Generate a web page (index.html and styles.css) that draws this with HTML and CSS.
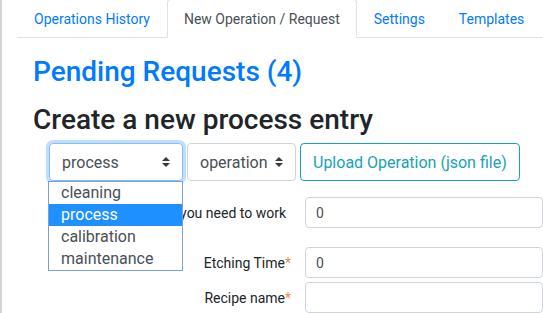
FILE: index.html
```html
<!DOCTYPE html>
<html lang="en">
<head>
    <meta charset="UTF-8">
    <title>New Operation / Request</title>
    <link rel="stylesheet" href="styles.css">
</head>
<body>
    <div class="page">
        <ul class="nav-tabs">
            <li><a class="nav-link" href="#">Operations History</a></li>
            <li><a class="nav-link active" href="#">New Operation / Request</a></li>
            <li><a class="nav-link" href="#">Settings</a></li>
            <li><a class="nav-link" href="#">Templates</a></li>
        </ul>

        <main class="content">
            <h2 class="pending">Pending Requests (4)</h2>
            <h2 class="create">Create a new process entry</h2>

            <div class="toolbar">
                <div class="select-wrap">
                    <div class="fake-select focused">
                        <span>process</span>
                        <svg class="arrows" width="8" height="10" viewBox="0 0 8 10"><path d="M4 0 L8 4 H0 Z M0 6 H8 L4 10 Z" fill="#343a40"/></svg>
                    </div>
                    <ul class="dropdown">
                        <li>cleaning</li>
                        <li class="selected">process</li>
                        <li>calibration</li>
                        <li>maintenance</li>
                    </ul>
                </div>
                <div class="fake-select small">
                    <span>operation</span>
                    <svg class="arrows" width="8" height="10" viewBox="0 0 8 10"><path d="M4 0 L8 4 H0 Z M0 6 H8 L4 10 Z" fill="#343a40"/></svg>
                </div>
                <button class="btn-upload">Upload Operation (json file)</button>
            </div>

            <form class="entry-form">
                <div class="form-row first">
                    <label class="no-req"><span>Time you need to work</span></label>
                    <input type="text" value="0">
                </div>
                <div class="form-row">
                    <label><span>Etching Time<span class="req">*</span></span></label>
                    <input type="text" value="0">
                </div>
                <div class="form-row tight">
                    <label><span>Recipe name<span class="req">*</span></span></label>
                    <input type="text" value="">
                </div>
            </form>
        </main>
    </div>
</body>
</html>
```

FILE: styles.css
```css
body {
    margin: 0;
    font-family: Roboto, "Liberation Sans", sans-serif;
    color: #212529;
    background-color: #fff;
    overflow: hidden;
}
.page {
    border-left: 2px solid #d4d4d4;
    min-height: 313px;
    padding-left: 15px;
}
.nav-tabs {
    display: flex;
    list-style: none;
    margin: -1px 0 0 0;
    padding: 0;
    border-bottom: 1px solid #dee2e6;
}
.nav-link {
    display: block;
    padding: 9px 16px 8px;
    font-size: 14px;
    line-height: 20px;
    color: #007bff;
    text-decoration: none;
    border: 1px solid transparent;
    margin-bottom: -1px;
}
.nav-link.active {
    color: #495057;
    background-color: #fff;
    border-color: #dee2e6 #dee2e6 #fff;
    border-top-left-radius: 4px;
    border-top-right-radius: 4px;
}
.content {
    padding-left: 16px;
}
h2 {
    margin: 0;
    font-weight: 500;
    font-size: 28px;
    line-height: 34px;
}
.pending {
    color: #007bff;
    margin-top: 17px;
}
.create {
    margin-top: 14px;
}
.toolbar {
    display: flex;
    gap: 4px;
    margin-top: 6px;
    margin-left: 16px;
}
.select-wrap {
    position: relative;
}
.fake-select {
    box-sizing: border-box;
    display: flex;
    align-items: center;
    justify-content: space-between;
    height: 38px;
    width: 134px;
    padding: 0 12px;
    border: 1px solid #ced4da;
    border-radius: 4px;
    font-size: 16px;
    color: #495057;
}
.fake-select.small {
    width: 109px;
}
.fake-select.focused {
    border-color: #80bdff;
    box-shadow: 0 0 0 3px rgba(0, 123, 255, 0.25);
}
.arrows {
    display: block;
}
.dropdown {
    position: absolute;
    top: 38px;
    left: -1px;
    z-index: 2;
    box-sizing: border-box;
    width: 135px;
    margin: 0;
    padding: 0;
    list-style: none;
    background-color: #fff;
    border: 1px solid #7a9fd9;
}
.dropdown li {
    height: 22px;
    line-height: 22px;
    padding-left: 12px;
    font-size: 16px;
    color: #495057;
}
.dropdown li.selected {
    background-color: #1e90ff;
    color: #fff;
}
.btn-upload {
    height: 38px;
    padding: 0 12px;
    background-color: #fff;
    border: 1px solid #17a2b8;
    border-radius: 4px;
    color: #17a2b8;
    font-family: inherit;
    font-size: 16px;
}
.entry-form {
    margin-left: 16px;
}
.form-row {
    display: flex;
    align-items: center;
    gap: 14px;
    height: 31px;
    margin-top: 19px;
}
.form-row.first {
    margin-top: 16px;
}
.form-row.tight {
    margin-top: 4px;
}
.form-row label {
    box-sizing: border-box;
    width: 242px;
    flex-shrink: 0;
    display: flex;
    justify-content: flex-end;
    font-size: 14px;
    color: #212529;
    white-space: nowrap;
    overflow: hidden;
}
.form-row label.no-req {
    padding-right: 5px;
}
.req {
    color: #f0883e;
}
.form-row input {
    display: block;
    box-sizing: border-box;
    width: 260px;
    height: 31px;
    margin: 0;
    padding: 0 10px;
    border: 1px solid #ced4da;
    border-radius: 4px;
    font-family: inherit;
    font-size: 14px;
    color: #495057;
}
```
